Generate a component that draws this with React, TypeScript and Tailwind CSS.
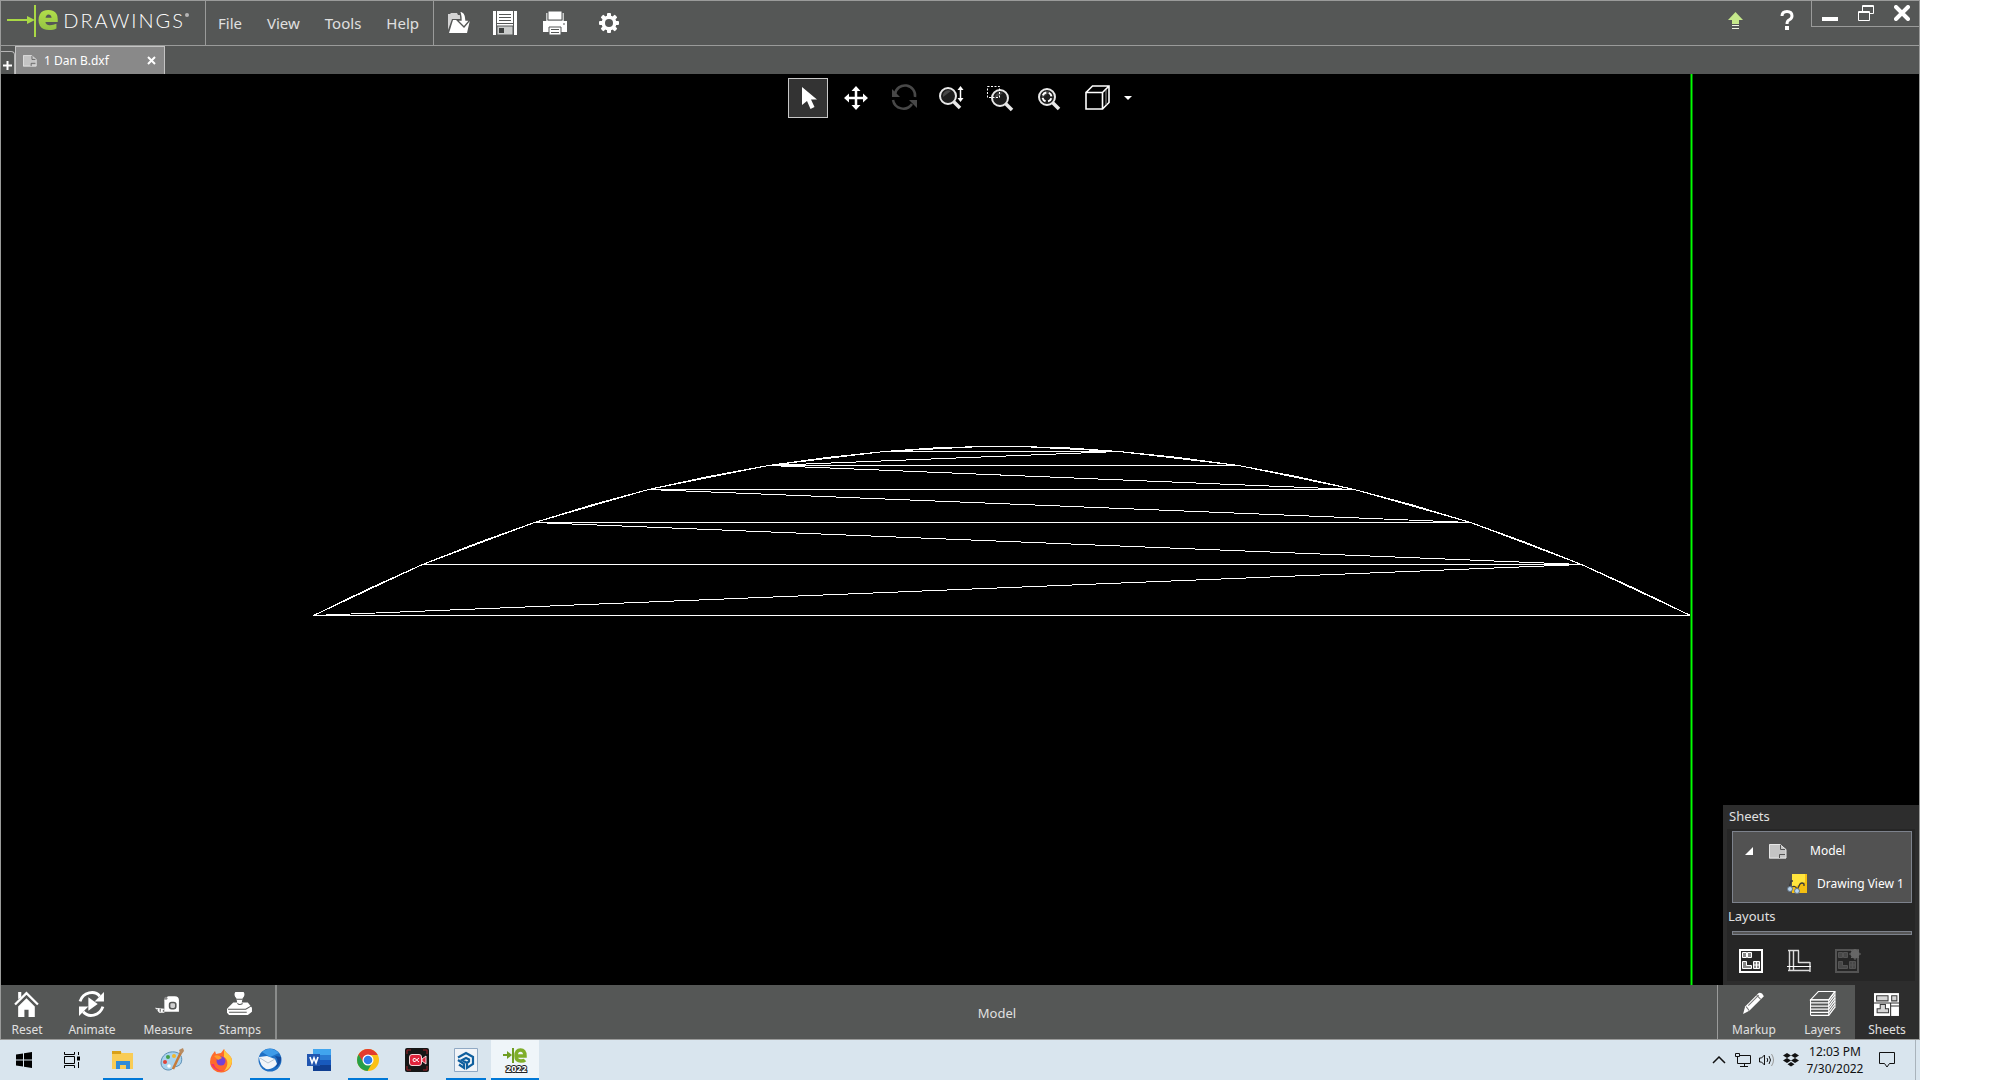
import type { ReactNode } from "react";
import clsx from "clsx";

const outline: [number, number][] = [
  [312, 541], [421, 490], [533, 448], [647, 415], [767, 391], [883, 377], [980, 372],
  [1019, 372], [1117, 377], [1237, 391], [1353, 415], [1469, 448], [1580, 490], [1689, 541],
];

// the true arc bulges about a pixel over each facet
const arc = outline.flatMap(([x, y], i) => {
  const next = outline[i + 1];
  return next ? [[x, y], [(x + next[0]) / 2, (y + next[1]) / 2 - (y === next[1] ? 0 : 1)]] : [[x, y]];
});

const edges = [
  [311, 541, 1689, 541],
  [421, 490, 1580, 490],
  [533, 448, 1469, 448],
  [647, 415, 1353, 415],
  [767, 391, 1237, 391],
  [883, 377, 1117, 377],
  [312, 541, 1580, 490],
  [533, 448, 1580, 490],
  [647, 415, 1469, 448],
  [767, 391, 1353, 415],
  [767, 391, 1117, 377],
];

function Logo() {
  return (
    <div className="flex h-full w-[205px] items-center border-r border-[#9a9b9a] pl-1.5">
      <svg width="30" height="34" viewBox="0 0 30 34" className="-mt-1">
        <path d="M0 16h22" stroke="#a9d845" strokeWidth="2" />
        <path d="M20 12l8 4-8 4z" fill="#a9d845" />
        <path d="M28 1v32" stroke="#a9d845" strokeWidth="2" />
      </svg>
      <span className="-mt-3 bg-linear-to-b from-[#c0ec4e] to-[#8fbf42] bg-clip-text font-['Open_Sans'] text-[36px] leading-8 font-extrabold text-transparent">
        e
      </span>
      <span className="-mt-1.5 ml-1 font-['Lato'] text-[20px] leading-6 font-light tracking-widest text-white">DRAWINGS</span>
      <span className="-mt-4 size-1 shrink-0 rounded-full bg-[#b5b5b5]" />
    </div>
  );
}

function OpenIcon() {
  return (
    <svg width="26" height="26" viewBox="0 0 26 26">
      <path d="M1 20V4h2l1-1h6l1 2h5v4H5z" fill="#d4d4d4" />
      <path d="M6 10h17l-3 13H2z" fill="#fff" />
      <path d="M12 1c5 0 7 4 7 9h4l-6 7-7-7h4c0-4 0-6-2-9z" fill="#fff" stroke="#555756" strokeWidth="1.4" />
    </svg>
  );
}

function SaveIcon() {
  return (
    <svg width="24" height="24" viewBox="0 0 24 24">
      <path d="M0 0h24v24H0z" fill="#fff" />
      <path d="M3.5 0v24M20.500 0v24" stroke="#555756" />
      <path d="M4 12.500h16M6 3.500h12M6 6.500h12M6 9.500h12" stroke="#555756" />
      <path d="M4 15h16v9H4z" fill="#c9cbca" stroke="#555756" />
      <path d="M6 17h5v5H6z" fill="#3d3f3e" />
    </svg>
  );
}

function PrintIcon() {
  return (
    <svg width="24" height="24" viewBox="0 0 24 24">
      <path d="M3 2h18v8H3z" fill="#c9cbca" />
      <path d="M5 0h14v9H5z" fill="#fff" stroke="#555756" />
      <path d="M0 10h24v11H0z" fill="#fff" />
      <path d="M20 13h2" stroke="#555756" />
      <path d="M6 16h12v8H6z" fill="#fff" stroke="#555756" />
      <path d="M8 18.500h8M8 21.500h8" stroke="#555756" />
    </svg>
  );
}

function GearIcon() {
  return (
    <svg width="20" height="20" viewBox="-10 -10 20 20">
      {[0, 45, 90, 135].map((a) => (
        <rect key={a} x="-2" y="-10" width="4" height="20" rx="1" fill="#fff" transform={`rotate(${a})`} />
      ))}
      <circle r="7.500" fill="#fff" />
      <circle r="4" fill="#555756" />
    </svg>
  );
}

function PageIcon({ className }: { className?: string }) {
  return (
    <svg width="18" height="15" viewBox="0 0 18 15" className={className}>
      <path d="M0 .5h11l6 5v9H0z" fill="#c4c4c4" />
      <path d="M.5 14V.5H11l6 5V14z" fill="none" stroke="#e6e6e6" />
      <path d="M11.500 1v4.500H16M10.500 14v-3.500H16" fill="none" stroke="#555" />
    </svg>
  );
}

function Lens() {
  return (
    <>
      <circle cx="10" cy="10" r="8" fill="#1c1c1c" stroke="#e8e8e8" strokeWidth="2" />
      <path d="M5 11a5.500 5.500 0 0 1 8-6z" fill="#6a6a6a" opacity=".55" />
      <path d="M15.500 15.500l6.500 6.500" stroke="#e8e8e8" strokeWidth="3.500" />
    </>
  );
}

const viewTools: { name: string; icon: ReactNode }[] = [
  {
    name: "Select",
    icon: <path d="M6 1v18l5-4 3.500 8 4-2-3.500-7.500h6z" fill="#fff" />,
  },
  {
    name: "Pan",
    icon: (
      <>
        <path d="M12 3v18M3 12h18" stroke="#fff" strokeWidth="2.500" />
        <path d="M12 0l4.500 5h-9zM12 24l4.500-5h-9zM0 12l5-4.500v9zM24 12l-5-4.500v9z" fill="#fff" />
      </>
    ),
  },
  {
    name: "Rotate",
    icon: (
      <>
        <path d="M3 8a10 10 0 0 1 20 3M1 14a10.500 10.500 0 0 0 19 4" fill="none" stroke="#484848" strokeWidth="2.500" />
        <path d="M0 3v8h8zM25 22v-8h-8z" fill="#484848" />
      </>
    ),
  },
  {
    name: "Zoom",
    icon: (
      <g transform="translate(-2 0)">
        <Lens />
        <path d="M22.500 3v11" stroke="#fff" strokeWidth="1.500" />
        <path d="M22.500 0l3 4h-6zM22.500 16l3-4h-6z" fill="#fff" />
      </g>
    ),
  },
  {
    name: "Zoom to area",
    icon: (
      <>
        <g transform="translate(2 2)">
          <Lens />
        </g>
        <path d="M-.5.5h12v11h-12z" fill="none" stroke="#fff" strokeDasharray="2 1.500" />
      </>
    ),
  },
  {
    name: "Zoom to fit",
    icon: (
      <g transform="translate(1 1)">
        <Lens />
        <circle cx="10" cy="10" r="4.500" fill="none" stroke="#fff" strokeWidth="2" strokeDasharray="4.500 2.570" strokeDashoffset="-1.300" />
      </g>
    ),
  },
  {
    name: "View orientation",
    icon: (
      <g fill="none" stroke="#fff" strokeWidth="1.600" transform="translate(1 0)">
        <path d="M1 6.500h16.500V23H1zM1 6.500L7.500 0H24v16.500L17.500 23M17.500 6.500L24 0" />
        <path d="M21 4v15" stroke="#999" strokeWidth="1" />
      </g>
    ),
  },
];

const bottomTools: { name: string; width: string; icon: ReactNode }[] = [
  {
    name: "Reset",
    width: "w-[52px]",
    icon: (
      <>
        <path d="M4 15l8-8 8 8v10h-6v-7h-4v7H4z" fill="#fff" />
        <path d="M1 13L12 2l11 11" fill="none" stroke="#fff" strokeWidth="2.200" />
        <path d="M4 1h3v5L4 8z" fill="#fff" />
      </>
    ),
  },
  {
    name: "Animate",
    width: "w-[78px]",
    icon: (
      <>
        <path d="M1 10C4 1 15-1 20 5M23 15c-3 9-14 11-19 5" fill="none" stroke="#fff" strokeWidth="2.800" />
        <path d="M24 1v9h-9zM0 24v-9h9zM9 6l9 6.500L9 19z" fill="#fff" />
      </>
    ),
  },
  {
    name: "Measure",
    width: "w-[74px]",
    icon: (
      <>
        <path d="M9 20V9q0-3 4-4h6q4 0 4 4v11z" fill="#fff" />
        <path d="M0 16l9 1v4H4z" fill="#fff" />
        <path d="M2 17v2M5 17v3M8 18v2" stroke="#555756" />
        <rect x="14" y="11" width="6" height="6" rx="2" fill="#d0d0d0" stroke="#555756" strokeWidth="1.500" />
        <circle cx="10.500" cy="7" r="1.500" fill="#8a8a8a" />
      </>
    ),
  },
  {
    name: "Stamps",
    width: "w-[70px]",
    icon: (
      <>
        <path d="M8 1h8q2 3-1 6l-1 5h-4L9 7Q6 4 8 1z" fill="#fff" />
        <path d="M6 11h14l4 5v4l-4 3H2l-2-2v-4z" fill="#fff" />
        <path d="M1 17.500h17l5-3M9 8h6M10 12q2 2 5 0M2 20.500h17" fill="none" stroke="#555756" />
      </>
    ),
  },
];

const panelTabs: { name: string; width: string; icon: ReactNode }[] = [
  {
    name: "Markup",
    width: "w-[72px]",
    icon: (
      <>
        <path d="M2 22l2-7L17 2q3-1 5 3L8 19z" fill="#fff" />
        <path d="M5 15l3 4M15 4l4 4M7 14L17 4" stroke="#777" fill="none" />
      </>
    ),
  },
  {
    name: "Layers",
    width: "w-[65px]",
    icon: (
      <g fill="none" stroke="#fff">
        <path d="M.5 8.500L8 .5h16l-6 8z" />
        {[8, 11, 14, 17, 20, 23].map((y) => (
          <path key={y} d={`M.5 ${y}.5H18l6-8`} strokeWidth="1.200" />
        ))}
        <path d="M.5 8v15M18 8v15M24 1v15" />
      </g>
    ),
  },
  {
    name: "Sheets",
    width: "w-[64px]",
    icon: (
      <>
        <path d="M0 2h24v22H0z" fill="#fff" />
        <path d="M2.500 4.500h11v5h-11zM17 4.500h5v5h-5zM3 21v-4h3v-4h5v4h3v4z" fill="#d5d5d5" stroke="#3a3a3a" />
        <path d="M0 11.500h24M16 12v12M16 14.500h8" stroke="#2d2d2d" fill="none" />
      </>
    ),
  },
];

function TabIcon({ children }: { children: ReactNode }) {
  return (
    <svg width="26" height="26" viewBox="0 0 25 25" className="overflow-visible">
      {children}
    </svg>
  );
}

function LayoutGlyph({ tone }: { tone: string }) {
  return (
    <g fill="none" stroke={tone}>
      <path d="M1 1h22v22H1z" strokeWidth="2" />
      <path d="M3.500 3.500h4v5h-4zM8.500 3.500h4v5h-4zM14.500 12.500h6v7h-6zM14.500 16h6M17.500 12.500v7" fill="#888" />
      <path d="M3.500 12.500h4v4h5v3h-9z" fill="#888" />
    </g>
  );
}

function SheetsPanel() {
  return (
    <aside className="z-10 w-[196px] self-end justify-self-end bg-[#2d2d2d] px-1 pb-1 text-[13px] text-[#e0e0e0] [grid-area:1/1]">
      <h2 className="h-6 pl-0.5 leading-[22px]">Sheets</h2>
      <div className="bg-[#262626] pt-0.5 pr-[3px] pl-[5px]">
        <ul className="h-[72px] border border-[#7d828c] bg-[#525252] text-[12px] text-white">
          <li className="flex h-9 items-center pt-0.5">
            <svg width="8" height="8" viewBox="0 0 8 8" className="ml-3">
              <path d="M8 0v8H0z" fill="#fff" />
            </svg>
            <PageIcon className="ml-4" />
            <span className="ml-[23px]">Model</span>
          </li>
          <li className="flex h-8 items-center pl-[54px]">
            <svg width="22" height="20" viewBox="0 0 22 20">
              <path d="M5 0h15v19H5z" fill="#f5bf12" />
              <path d="M5 0h13v8L5 14z" fill="#ffe43d" />
              <path d="M2 14l2-7h2M10 16l3-6q2-2 4 0v2M5 13q3-2 5 2" fill="none" stroke="#3a3a3a" strokeWidth="1.300" />
              <circle cx="3" cy="15" r="2.500" fill="#b9d6ef" stroke="#678" />
              <circle cx="10" cy="17" r="2.500" fill="#b9d6ef" stroke="#678" />
            </svg>
            <span className="ml-2 whitespace-nowrap">Drawing View 1</span>
          </li>
        </ul>
        <h2 className="-ml-1 h-7 leading-[27px]">Layouts</h2>
        <div className="h-1 border border-[#7d828c] bg-[#555]" />
        <div className="flex h-[46px] items-center gap-6 pt-1.5 pl-[7px]">
          <button aria-label="Sheet view">
            <svg width="24" height="24" viewBox="0 0 24 24">
              <LayoutGlyph tone="#fff" />
            </svg>
          </button>
          <button aria-label="Model view">
            <svg width="24" height="24" viewBox="0 0 24 24" fill="none" stroke="#dcdcdc">
              <path d="M2.500 22V1.500M6.500 22V1.500M11.500 14V1.500M1 1.500h11M11.500 13.500H23M23 13v10M1 21.500h22" strokeWidth="1.400" />
              <path d="M0 17.500h24" stroke="#fff" />
            </svg>
          </button>
          <button aria-label="New layout" disabled>
            <svg width="26" height="24" viewBox="0 0 26 24" opacity=".35">
              <LayoutGlyph tone="#aaa" />
              <circle cx="20" cy="5" r="4.500" fill="#ddd" />
              <path d="M20-1v12M14 5h12M16 1l8 8M24 1l-8 8" stroke="#ddd" />
            </svg>
          </button>
        </div>
      </div>
    </aside>
  );
}

const taskApps: { name: string; running?: boolean; active?: boolean; icon: ReactNode }[] = [
  {
    name: "Start",
    icon: <path d="M3 6.500l7-1v6H3zM11 5.300l8-1.300v7.500h-8zM3 12.500h7v6l-7-1zM11 12.500h8V20l-8-1.200z" fill="#000" />,
  },
  {
    name: "Task View",
    icon: (
      <g fill="none" stroke="#000" transform="translate(-2 0)">
        <path d="M4.500 8.500h10v7h-10zM4.500 4v2.500h10V4M4.500 20v-2.500h10V20M18.500 4v3M18.500 14v6" />
        <path d="M17 8.500h3v4h-3z" fill="#000" stroke="none" />
      </g>
    ),
  },
  {
    name: "File Explorer",
    running: true,
    icon: (
      <>
        <path d="M1 3h8l2 2h11v16H1z" fill="#f9cc55" />
        <path d="M1 3h9v3H1z" fill="#d9a019" />
        <path d="M5 21v-8h14v8h-4v-4H9v4z" fill="#2f8bd8" />
      </>
    ),
  },
  {
    name: "Paint",
    icon: (
      <>
        <path d="M1 15C1 7 8 3 15 4c6 1 8 6 6 11-2 4-6 3-8 5-3 4-12 2-12-5z" fill="#a9d3ee" stroke="#5c8fb5" />
        <circle cx="5" cy="14" r="2" fill="#e0453a" />
        <circle cx="8" cy="9" r="2" fill="#43a047" />
        <circle cx="14" cy="8" r="2" fill="#f3b72b" />
        <circle cx="9" cy="18" r="1.800" fill="#fff" />
        <path d="M22 2l-9 19" stroke="#c77b39" strokeWidth="2.500" />
        <path d="M19 2l4-2 1 3-3 4z" fill="#b88b60" />
      </>
    ),
  },
  {
    name: "Firefox",
    icon: (
      <>
        <path d="M3 7l3-4 1 3 5-1 3-4c2 5 8 6 8 12a11 11 0 0 1-22 1q0-4 2-7z" fill="#ff6a2b" />
        <path d="M15 1c2 5 8 6 8 12 0 5-4 9-8 10 5-5 4-12 0-14z" fill="#ffc93c" />
        <path d="M2 16q4 8 13 7-9-1-10-7z" fill="#f0336b" />
        <circle cx="12" cy="13" r="4.500" fill="#7542d5" />
        <path d="M5 8q5-2 8 2l-4 2z" fill="#ff9a2b" />
      </>
    ),
  },
  {
    name: "Thunderbird",
    running: true,
    icon: (
      <>
        <circle cx="12" cy="12" r="11.500" fill="#1f6fc4" />
        <path d="M4 4Q12-3 21 5l-9 4z" fill="#3f9be8" />
        <path d="M1 9l8-1 8 3 2 5q-4 6-11 5-6-3-7-12z" fill="#f2f5f9" />
        <path d="M2 10l8 5 7-4" fill="none" stroke="#b5c2d0" />
        <path d="M17 8q5 5 0 12 7-4 6-11z" fill="#144b9c" />
      </>
    ),
  },
  {
    name: "Word",
    icon: (
      <>
        <path d="M6 1h18v6H6z" fill="#41a5ee" />
        <path d="M6 7h18v5H6z" fill="#2b7cd3" />
        <path d="M6 12h18v5H6z" fill="#185abd" />
        <path d="M6 17h18v6H6z" fill="#103f91" />
        <path d="M0 6h13v12H0z" fill="#2055b0" />
        <path d="M3 9l2 6 2-5 2 5 2-6" fill="none" stroke="#fff" strokeWidth="1.600" />
      </>
    ),
  },
  {
    name: "Chrome",
    running: true,
    icon: (
      <>
        <circle cx="12" cy="12" r="11" fill="#fbc116" />
        <path d="M2.500 6.500a11 11 0 0 1 19 0V7H12l-5 8z" fill="#e33b2e" />
        <path d="M2.500 6.500a11 11 0 0 0 9 16.500l5-8.500H7.500z" fill="#269f49" />
        <circle cx="12" cy="12" r="5.500" fill="#fff" />
        <circle cx="12" cy="12" r="4.300" fill="#2f7de9" />
      </>
    ),
  },
  {
    name: "Screen Recorder",
    icon: (
      <>
        <rect width="24" height="24" rx="2" fill="#161616" />
        <path d="M2 6V2h4M18 2h4v4M2 18v4h4M18 22h4v-4" fill="none" stroke="#a02028" />
        <rect x="4.500" y="6.500" width="12" height="11" rx="2.500" fill="#e0243c" stroke="#f6d5d8" />
        <path d="M17 11l4-3v8l-4-3z" fill="#e0243c" stroke="#f6d5d8" />
        <path d="M14 14l-4-3.500q-2-.5-2 1.500t2 1.500l4-3.500" fill="none" stroke="#fff" />
      </>
    ),
  },
  {
    name: "SketchUp",
    running: true,
    icon: (
      <>
        <path d="M.5.5h23v23H.5z" fill="#f1f4f8" stroke="#90a9c4" />
        <g fill="none" stroke="#0f5f9e" strokeWidth="2.200">
          <path d="M4 9.500l8-4.500 7 4v7l-6 4v-5l2-1.500v-2L12 10l-4 2 5 3" />
          <path d="M4 12l6 4v4l-5-3.500" />
        </g>
      </>
    ),
  },
  {
    name: "eDrawings",
    running: true,
    active: true,
    icon: (
      <>
        <path d="M0 7h5" stroke="#6f9d22" strokeWidth="2" />
        <path d="M4 3l5 4-5 4z" fill="#6f9d22" />
        <path d="M10 0v15" stroke="#6f9d22" strokeWidth="2" />
        <path d="M14 8h8q0-6-4.500-6T13 8q0 5 5 5 3 0 4-1" fill="none" stroke="#7fae2a" strokeWidth="3.500" />
        <text x="3" y="24" fontSize="9" fontWeight="700" fill="#fff" stroke="#222" strokeWidth="2" paintOrder="stroke">
          2022
        </text>
      </>
    ),
  },
];

function Taskbar() {
  return (
    <footer className="flex h-10 items-stretch bg-[#d9e5ee] text-[12px] text-[#111]">
      <div className="flex gap-px pl-px">
        {taskApps.map((app) => (
          <button
            key={app.name}
            aria-label={app.name}
            className={clsx("flex w-12 flex-col items-center justify-between", app.active && "bg-[#eff5f9]")}
          >
            <svg width="24" height="24" viewBox="0 0 24 24" className="mt-2 overflow-visible">
              {app.icon}
            </svg>
            <span className={clsx("h-0.5", app.active ? "w-full" : "w-10", app.running && "bg-[#0078d7]")} />
          </button>
        ))}
      </div>
      <div className="ml-auto flex items-center">
        <button aria-label="Show hidden icons" className="flex w-6 justify-center">
          <svg width="14" height="8" viewBox="0 0 14 8">
            <path d="M1 7l6-6 6 6" fill="none" stroke="#111" strokeWidth="1.500" />
          </svg>
        </button>
        <button aria-label="Network" className="flex w-6 justify-center">
          <svg width="16" height="16" viewBox="0 0 16 16" fill="none" stroke="#111">
            <path d="M5 3.500h10.500v8H2.500V6M9.500 12v2.500M5 14.500h8" />
            <path d="M.5 1.500h4v3h-4zM2.500 5v3" />
          </svg>
        </button>
        <button aria-label="Volume" className="flex w-6 justify-center">
          <svg width="16" height="16" viewBox="0 0 16 16" fill="none" stroke="#111">
            <path d="M.5 6v4h2l3 3V3l-3 3zM8 6q1.500 2 0 4M10 4q3 4 0 8" />
            <path d="M12.500 2q4 6 0 12" stroke="#999" />
          </svg>
        </button>
        <button aria-label="Dropbox" className="flex w-6 justify-center">
          <svg width="16" height="14" viewBox="0 0 16 14">
            <path d="M4 0l4 2.500L4 5 0 2.500zM12 0l4 2.500L12 5 8 2.500zM4 5l4 2.500L4 10 0 7.500zM12 5l4 2.500-4 2.500-4-2.500zM8 9l3.500 2.300L8 13.500l-3.500-2.200z" fill="#111" />
          </svg>
        </button>
        <time className="w-16 text-center leading-[17px]">
          12:03 PM
          <br />
          7/30/2022
        </time>
        <button aria-label="Notifications" className="flex w-10 justify-center">
          <svg width="16" height="16" viewBox="0 0 16 16">
            <path d="M.5.5h15v11h-5L8 15l-2.500-3.500h-5z" fill="none" stroke="#111" />
          </svg>
        </button>
        <button aria-label="Show desktop" className="ml-2 h-full w-[5px] border-l border-[#a9b3bb]" />
      </div>
    </footer>
  );
}

export default function App() {
  return (
    <div className="min-h-screen bg-white">
      <div className="flex min-h-screen w-[96%] flex-col font-['Noto_Sans',sans-serif]">
        <div className="flex flex-1 flex-col border border-[#9a9b9a] bg-[#555756]">
          <header className="flex h-[45px] items-center border-b border-[#9a9b9a]">
            <Logo />
            <nav className="flex h-full items-center gap-[25px] border-r border-[#9a9b9a] pr-3.5 pl-3 text-[15px] text-[#e0e0e0]">
              {["File", "View", "Tools", "Help"].map((item) => (
                <button key={item}>{item}</button>
              ))}
            </nav>
            <div className="flex items-center pl-[13px]">
              <button aria-label="Open">
                <OpenIcon />
              </button>
              <button aria-label="Save" className="ml-5">
                <SaveIcon />
              </button>
              <button aria-label="Print" className="ml-[26px]">
                <PrintIcon />
              </button>
              <button aria-label="Options" className="ml-8">
                <GearIcon />
              </button>
            </div>
            <div className="ml-auto flex h-full items-center">
              <button aria-label="Update" className="mr-9 pb-1">
                <svg width="15" height="18" viewBox="0 0 15 18">
                  <path d="M7.500 0L15 8h-4v4H4V8H0z" fill="#c5e88b" />
                  <path d="M4 13.500h7M4 16.500h7" stroke="#f0f5e5" />
                </svg>
              </button>
              <button aria-label="Help topics" className="mr-4 pb-1.5">
                <svg width="16" height="20" viewBox="0 0 16 20">
                  <path d="M3 6q0-4.500 5-4.500T13 6q0 2.500-3 4-2 1-2 4" fill="none" stroke="#fff" strokeWidth="3" />
                  <path d="M6 16h4v4H6z" fill="#fff" />
                </svg>
              </button>
              <div className="flex h-[26px] items-center gap-5 self-start border-b border-l border-[#9a9b9a] pr-[9px] pb-0.5 pl-2.5">
                <button aria-label="Minimize">
                  <svg width="16" height="16" viewBox="0 0 16 16">
                    <path d="M0 12h16v4H0z" fill="#fff" />
                  </svg>
                </button>
                <button aria-label="Restore">
                  <svg width="16" height="16" viewBox="0 0 16 16" fill="none" stroke="#fff">
                    <path d="M4.500 6V.5h11v8H12M4 1.500h12" />
                    <path d="M.5 6.500h11v9H.5zM0 7.500h12" />
                  </svg>
                </button>
                <button aria-label="Close">
                  <svg width="16" height="16" viewBox="0 0 16 16">
                    <path d="M2 2l12 12M14 2L2 14" stroke="#fff" strokeWidth="4" strokeLinecap="round" />
                  </svg>
                </button>
              </div>
            </div>
          </header>

          <div className="flex h-7 items-end">
            <button aria-label="New tab" className="flex h-[23px] w-3.5 items-center justify-center rounded-tr-sm border-t border-r border-[#b5b5b5] pt-1">
              <svg width="9" height="9" viewBox="0 0 9 9">
                <path d="M4.500 0v9M0 4.500h9" stroke="#fff" strokeWidth="2" />
              </svg>
            </button>
            <div className="flex h-full w-[150px] items-center border border-b-0 border-[#c4c4c4] bg-[#898989] pr-2 pl-[7px] text-[12px] text-white">
              <PageIcon className="h-3 w-[14px]" />
              <span className="ml-[7px]">1 Dan B.dxf</span>
              <button aria-label="Close tab" className="ml-auto">
                <svg width="9" height="9" viewBox="0 0 9 9">
                  <path d="M1 1l7 7M8 1L1 8" stroke="#fff" strokeWidth="2" />
                </svg>
              </button>
            </div>
          </div>

          <main className="grid flex-1 bg-black">
            <svg viewBox="0 0 1918 911" className="w-full [grid-area:1/1]">
              <g stroke="#fff" fill="none" shapeRendering="crispEdges" transform="translate(.5 .5)">
                <polyline points={outline.map((p) => p.join(",")).join(" ")} />
                <polyline points={arc.map((p) => p.join(",")).join(" ")} />
                {edges.map(([x1, y1, x2, y2], i) => (
                  <line key={i} x1={x1} y1={y1} x2={x2} y2={y2} />
                ))}
              </g>
              <rect x="1689" width="3" height="911" fill="#007a00" />
              <rect x="1690" width="1" height="911" fill="#00ff00" />
            </svg>
            <div className="z-10 flex items-center gap-2 self-start justify-self-center pt-1 [grid-area:1/1]">
              {viewTools.map((tool, i) => (
                <button
                  key={tool.name}
                  aria-label={tool.name}
                  className={clsx("flex size-10 items-center justify-center pr-px pb-px", i === 0 && "border border-[#c8c8c8] bg-[#333]")}
                >
                  <svg width="24" height="24" viewBox="0 0 24 24" className="overflow-visible">
                    {tool.icon}
                  </svg>
                </button>
              ))}
              <button aria-label="More views">
                <svg width="8" height="4" viewBox="0 0 8 4">
                  <path d="M0 0h8L4 4z" fill="#fff" />
                </svg>
              </button>
            </div>
            <SheetsPanel />
          </main>

          <div className="flex h-[54px] text-[12px] leading-4 text-[#e0e0e0]">
            <div className="flex border-r-2 border-[#8a8c8b]">
              {bottomTools.map((tool) => (
                <button key={tool.name} className={clsx("flex flex-col items-center pt-1.5", tool.width)}>
                  <TabIcon>{tool.icon}</TabIcon>
                  <span className="mt-[5px]">{tool.name}</span>
                </button>
              ))}
            </div>
            <div className="flex flex-1 items-center justify-center pt-0.5 text-[13px]">Model</div>
            <div className="flex border-l border-[#9a9b9a]">
              {panelTabs.map((tab) => (
                <button
                  key={tab.name}
                  className={clsx("flex flex-col items-center pt-1.5", tab.width, tab.name === "Sheets" && "bg-[#2d2d2d]")}
                >
                  <TabIcon>{tab.icon}</TabIcon>
                  <span className="mt-[5px]">{tab.name}</span>
                </button>
              ))}
            </div>
          </div>
        </div>
        <Taskbar />
      </div>
    </div>
  );
}
